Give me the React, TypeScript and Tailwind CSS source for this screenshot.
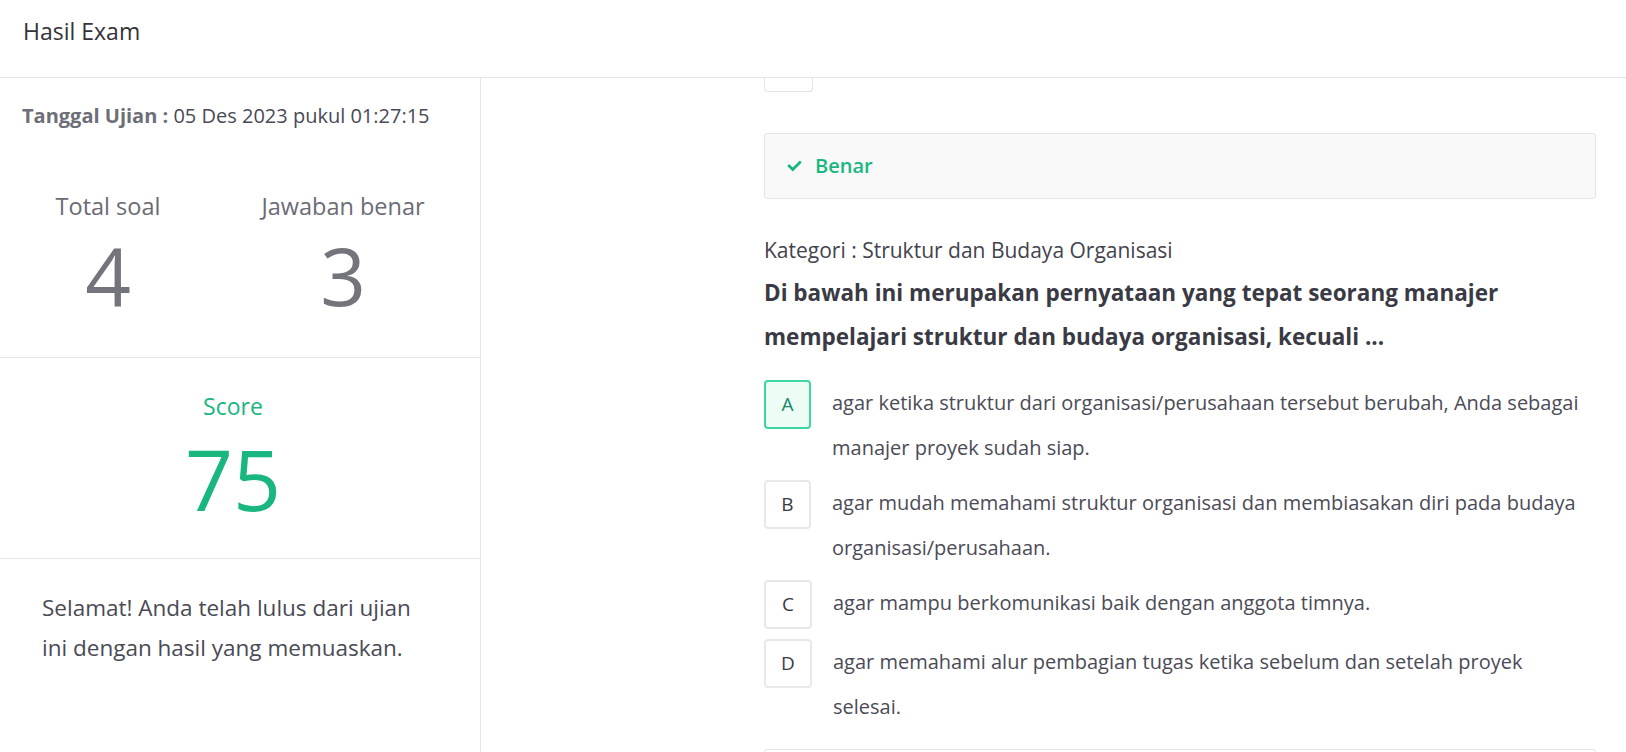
import React from "react";
import { FaCheck } from "react-icons/fa";

const options = [
  { k: "A", w: "w-[47px]", text: "agar ketika struktur dari organisasi/perusahaan tersebut berubah, Anda sebagai manajer proyek sudah siap.", active: true },
  { k: "B", w: "w-[47px]", text: "agar mudah memahami struktur organisasi dan membiasakan diri pada budaya organisasi/perusahaan." },
  { k: "C", w: "w-[48px]", text: "agar mampu berkomunikasi baik dengan anggota timnya." },
  { k: "D", w: "w-[48px]", text: "agar memahami alur pembagian tugas ketika sebelum dan setelah proyek selesai." },
];

export default function App() {
  return (
    <div className="w-[1626px] h-[752px] overflow-hidden bg-white font-['Open_Sans',sans-serif]">
      <header className="h-[78px] border-b border-[#e2e2e8] px-[23px] pt-[16px]">
        <h1 className="text-[23px] leading-[30px] text-[#333338]">Hasil Exam</h1>
      </header>
      <div className="flex h-[674px]">
        <aside className="w-[481px] shrink-0 border-r border-[#e6e6e6] flex flex-col">
          <div className="px-[22px] pt-[23px] text-[20px] leading-[30px] text-[#4a4a55]">
            <span className="font-bold text-[#6e6e78]">Tanggal Ujian : </span>05 Des 2023 pukul 01:27:15
          </div>
          <div className="flex mt-[60px] pb-[42px] border-b border-[#e6e6e6]">
            <div className="w-[216px] flex flex-col items-center">
              <div className="text-[23.5px] leading-[30px] text-[#6b6b75]">Total soal</div>
              <div className="mt-[14px] text-[80px] leading-[80px] text-[#74747c]">4</div>
            </div>
            <div className="w-[254px] flex flex-col items-center">
              <div className="text-[23.5px] leading-[30px] text-[#6b6b75]">Jawaban benar</div>
              <div className="mt-[14px] text-[80px] leading-[80px] text-[#74747c]">3</div>
            </div>
          </div>
          <div className="flex flex-col items-center pr-[14px] pt-[33px] pb-[37px] border-b border-[#e6e6e6]">
            <div className="text-[23px] leading-[30px] text-[#19b77f]">Score</div>
            <div className="mt-[16px] text-[84px] leading-[84px] text-[#19b77f]">75</div>
          </div>
          <div className="ml-[42px] pt-[29px] w-[385px] text-[22.5px] leading-[40px] text-[#4a4a55]">
            Selamat! Anda telah lulus dari ujian ini dengan hasil yang memuaskan.
          </div>
        </aside>
        <main className="flex-1 pl-[283px] pr-[30px]">
          <div className="w-[49px] h-[14px] border border-t-0 border-[#e2e2e2] rounded-b-[4px]" />
          <div className="mt-[41px] h-[66px] border border-[#e4e4e4] rounded-[3px] bg-[#f9f9f9] flex items-center pl-[22px]">
            <FaCheck className="w-[15px] h-[14px] text-[#19b77f]" />
            <span className="ml-[13px] text-[20px] font-semibold text-[#19b77f]">Benar</span>
          </div>
          <div className="mt-[36px] text-[21px] leading-[30px] text-[#43434d]">Kategori : Struktur dan Budaya Organisasi</div>
          <div className="mt-[6px] text-[22.5px] leading-[44px] font-bold text-[#3a3a44]">
            Di bawah ini merupakan pernyataan yang tepat seorang manajer mempelajari struktur dan budaya organisasi, kecuali ...
          </div>
          <div className="mt-[21px] flex flex-col">
            {options.map((o) => (
              <div key={o.k} className="flex items-start mb-[10px]">
                <div
                  className={
                    o.active
                      ? `${o.w} h-[49px] shrink-0 rounded-[4px] border-2 border-[#3dd6a0] bg-[#edfcf5] flex items-center justify-center text-[19px] text-[#17896a]`
                      : `${o.w} h-[49px] shrink-0 rounded-[4px] border-2 border-[#e8e8e8] bg-white flex items-center justify-center text-[19px] text-[#3a3a44]`
                  }
                >
                  {o.k}
                </div>
                <div className="ml-[21px] mr-[10px] text-[20px] leading-[45px] text-[#4b4b57]">{o.text}</div>
              </div>
            ))}
          </div>
          <div className="mt-[10px] h-[60px] border border-[#e4e4e4] rounded-[3px]" />
        </main>
      </div>
    </div>
  );
}
